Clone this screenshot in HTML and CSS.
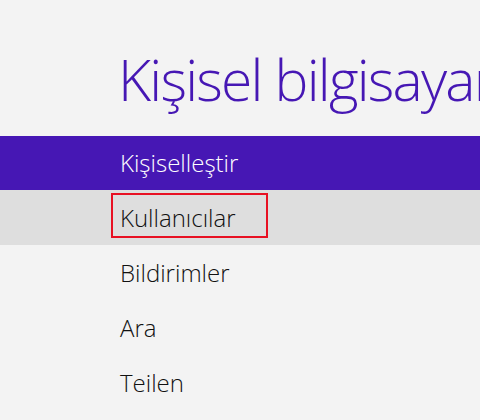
FILE: index.html
```html
<!DOCTYPE html>
<html lang="tr">
<head>
<meta charset="utf-8">
<link rel="stylesheet" href="styles.css">
</head>
<body>
<div class="page">
  <h1 class="title">Kişisel bilgisayar ayarları</h1>
  <ul class="menu">
    <li class="item selected"><span class="label">Kişiselleştir</span></li>
    <li class="item hover"><span class="label boxed">Kullanıcılar</span></li>
    <li class="item"><span class="label">Bildirimler</span></li>
    <li class="item"><span class="label">Ara</span></li>
    <li class="item"><span class="label">Teilen</span></li>
  </ul>
</div>
</body>
</html>
```
FILE: styles.css
```css
html, body {
  margin: 0;
  padding: 0;
  background: #f3f3f3;
}
.page {
  width: 480px;
  height: 420px;
  overflow: hidden;
  font-family: "Open Sans", "Noto Sans", sans-serif;
  font-weight: 300;
}
.title {
  margin: 0;
  padding: 41px 0 0 118px;
  height: 136px;
  box-sizing: border-box;
  font-size: 57px;
  font-weight: 300;
  line-height: 76px;
  letter-spacing: -1.8px;
  color: #4617b4;
  white-space: nowrap;
  overflow: hidden;
}
.menu {
  list-style: none;
  margin: 0;
  padding: 0;
}
.item {
  height: 55px;
  display: flex;
  align-items: center;
  padding-left: 120px;
  font-size: 24px;
  color: #111111;
}
.item.selected {
  height: 54px;
  background: #4617b4;
  color: #ffffff;
}
.item.hover {
  background: #dedede;
}
.label {
  line-height: 32px;
}
.boxed {
  margin-left: -9px;
  margin-bottom: 4px;
  padding: 7px 30px 2px 7px;
  border: 2px solid #e81123;
}
```
